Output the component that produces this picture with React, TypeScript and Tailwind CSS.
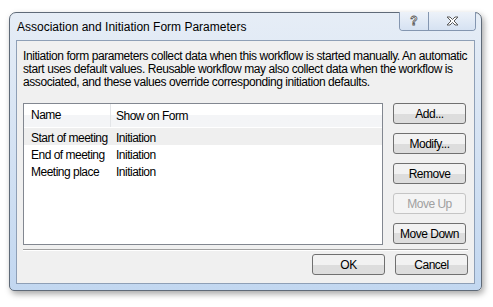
const font = { fontFamily: '"Liberation Sans", Arial, sans-serif' };

function Btn({ label, disabled }: { label: string; disabled?: boolean }) {
  return (
    <button
      type="button"
      className={
        "h-[21px] w-[73px] rounded-[3px] border text-[12px] leading-none tracking-[-0.5px] " +
        (disabled
          ? "border-[#c5c5c5] bg-[#f4f4f4] text-[#a0a0a0]"
          : "border-[#707070] bg-gradient-to-b from-[#f2f2f2] from-50% to-[#dddddd] to-50% text-black")
      }
    >
      {label}
    </button>
  );
}

const rows = [
  { name: "Start of meeting", show: "Initiation", hi: true },
  { name: "End of meeting", show: "Initiation" },
  { name: "Meeting place", show: "Initiation" },
];

export default function App() {
  return (
    <div className="h-[307px] w-[493px] bg-white pl-[9px] pt-[12px] text-black" style={font}>
      <div className="flex h-[279px] w-[473px] flex-col rounded-t-[7px] rounded-b-[5px] border border-[#5f6a78] bg-gradient-to-b from-[#e6edf6] to-[#c2d7f0] px-[6px] pb-[6px] shadow-[2px_3px_6px_rgba(0,0,0,0.35)]">
        <div className="flex h-[27px] items-start justify-between">
          <div className="pl-[1px] pt-[8px] text-[12px] leading-none">Association and Initiation Form Parameters</div>
          <div className="-mr-[1px] -mt-[1px] flex h-[19px] overflow-hidden rounded-b-[4px] border border-t-0 border-[#8496b0]">
            <div className="flex w-[29px] items-center justify-center border-r border-[#8496b0] bg-gradient-to-b from-[#edf2f9] to-[#d6e2f2]">
              <span className="text-[12px] font-bold leading-none text-white [-webkit-text-stroke:0.8px_#555]">?</span>
            </div>
            <div className="flex w-[46px] items-center justify-center bg-gradient-to-b from-[#edf2f9] to-[#d6e2f2]">
              <svg width="13" height="10" viewBox="0 0 13 10">
                <path
                  d="M1 1h3l2.5 2.5L9 1h3L8 5l4 4H9L6.5 6.5 4 9H1l4-4z"
                  fill="#fff"
                  stroke="#5a5a5a"
                  strokeWidth="1"
                  strokeLinejoin="round"
                />
              </svg>
            </div>
          </div>
        </div>
        <div className="flex flex-1 flex-col border border-[#8e9fb6] bg-[#f0f0f0] px-[6px]">
          <p className="whitespace-nowrap pt-[9px] text-[12px] leading-[13px] tracking-[-0.42px]">
            Initiation form parameters collect data when this workflow is started manually. An automatic
            <br />
            start uses default values. Reusable workflow may also collect data when the workflow is
            <br />
            associated, and these values override corresponding initiation defaults.
          </p>
          <div className="mt-[14px] flex gap-[10px]">
            <div className="h-[142px] w-[360px] border border-[#828790] bg-white text-[12px] tracking-[-0.5px]">
              <div className="flex h-[23px] items-center bg-gradient-to-b from-white from-50% to-[#f4f5f7] to-50%">
                <div className="h-full w-[87px] border-r border-[#e3e5e8] pl-[7px] leading-[23px]">Name</div>
                <div className="pl-[5px]">Show on Form</div>
              </div>
              <div className="mt-[1px]">
                {rows.map((r) => (
                  <div
                    key={r.name}
                    className={"flex h-[17px] items-center whitespace-nowrap pt-[2px] " + (r.hi ? "bg-[#efefef]" : "")}
                  >
                    <div className="w-[87px] pl-[7px]">{r.name}</div>
                    <div className="pl-[5px]">{r.show}</div>
                  </div>
                ))}
              </div>
            </div>
            <div className="flex flex-col gap-[9px]">
              <Btn label="Add..." />
              <Btn label="Modify..." />
              <Btn label="Remove" />
              <Btn label="Move Up" disabled />
              <Btn label="Move Down" />
            </div>
          </div>
          <div className="mt-[4px] border-t border-[#a0a0a0] border-b border-b-white" />
          <div className="mt-[3px] flex justify-end gap-[10px]">
            <Btn label="OK" />
            <Btn label="Cancel" />
          </div>
        </div>
      </div>
    </div>
  );
}
